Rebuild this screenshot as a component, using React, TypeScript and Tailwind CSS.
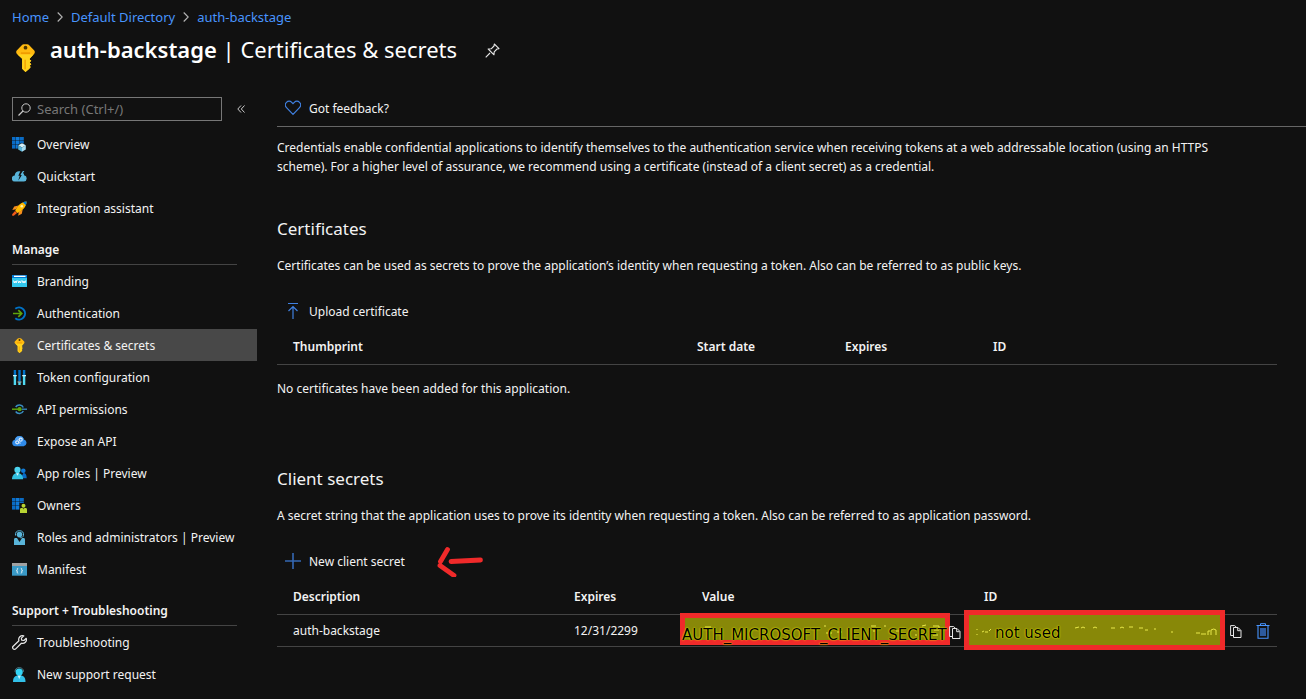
import type { ReactNode } from "react";

function Glyph({ children, size = "size-[15px]", box = "0 0 15 15" }: { children: ReactNode; size?: string; box?: string }) {
  return (
    <svg viewBox={box} className={`${size} shrink-0`} fill="none" aria-hidden="true">
      {children}
    </svg>
  );
}

function TileGrid() {
  return (
    <g>
      {[0, 4, 8].map((y) => (
        <g key={y}>
          <rect x="0" y={y} width="3.6" height="3.6" fill="#0a6bc4" />
          <rect x="4" y={y} width="3.6" height="3.6" fill="#0f7ad8" />
          <rect x="8" y={y} width="3.8" height="3.6" fill="#0a6bc4" />
        </g>
      ))}
    </g>
  );
}

const OverviewIcon = () => (
  <Glyph>
    <TileGrid />
    <path d="M9.8 5.8 14 8v4.6L9.8 15 5.8 12.600V8z" fill="#111" />
    <path d="M10 6.300 13.800 8.300 10 10.400 6.200 8.300z" fill="#d3effa" />
    <path d="M6.200 8.300 10 10.400v4.300L6.200 12.500z" fill="#59b4d9" />
    <path d="M13.800 8.300 10 10.400v4.300l3.800-2.200z" fill="#a5daf0" />
  </Glyph>
);

const QuickstartIcon = () => (
  <Glyph>
    <path d="M3 12.500a3 3 0 0 1-.3-6A4.200 4.200 0 0 1 7.500 2.300a5 5 0 0 1 4.600 3.900A3.200 3.200 0 0 1 12 12.500z" fill="#59b4d9" />
    <path d="M8.900 1 6.300 6.800h1.500L6.200 11.600 10.600 5.600H9.200L11 1z" fill="#111" />
    <path d="M10.800 1.900h1.600L10.200 5h1.900L8.400 9.800 9.800 6.100H8.400z" fill="#59b4d9" />
  </Glyph>
);

const RocketIcon = () => (
  <Glyph>
    <path d="M6.500 4.500 2.200 5.400.3 9l3.600-.7zM10.700 8.500l-.9 4.200-3.600 2 .6-3.700z" fill="#f78d1e" />
    <path d="M14.600.4c-3 .1-5.300 1.200-7.400 3.300C5.400 5.400 4 7.700 3.200 9.700l2.200 2.200c2-.8 4.200-2.300 5.900-4C13.300 5.900 14.500 3.400 14.600.4z" fill="#ffb900" />
    <path d="M14.600.4c-1.400 0-2.700.3-3.800.8l3 3c.5-1.200.8-2.400.8-3.800z" fill="#0078d4" />
    <path d="M3 10 .2 13.200v1.600h1.600L5.100 12z" fill="#f05a1a" />
    <circle cx="9.800" cy="5.200" r="1.300" fill="#fff3a8" />
  </Glyph>
);

const BrandingIcon = () => (
  <Glyph>
    <rect y="1" width="15" height="12" rx=".6" fill="#32c8ee" />
    <path d="M0 4V1.600A.6.6 0 0 1 .6 1h13.800a.6.6 0 0 1 .6.600V4z" fill="#0078d4" />
    <rect x="2" y="1.700" width="11.500" height="1.300" fill="#fff" />
    <path d="M1.500 6.500l.8 2.500.9-2 .9 2 .8-2.500M5.900 6.500l.8 2.500.9-2 .9 2 .8-2.500M10.300 6.500l.8 2.500.9-2 .9 2 .8-2.500" stroke="#fff" strokeWidth=".9" />
  </Glyph>
);

const AuthIcon = () => (
  <Glyph>
    <path d="M3.300 2.800a6 6 0 1 1 0 9.400" stroke="#0072c6" strokeWidth="2" />
    <path d="M1 7.500h8.500M6.300 4.200l3.400 3.300-3.400 3.300" stroke="#5ea50b" strokeWidth="1.700" />
  </Glyph>
);

const KeyShape = () => (
  <>
    <path d="M6.600.2h1.800c.5 0 .8.200 1.100.5l2.700 2.800c.4.500.4 1.200 0 1.700L9.700 7.900v.4l.9.700-.9.900.9.900-.9.900.6.600-.9 1.100L7.500 15 5.700 13.300V7.900L2.800 5.200c-.4-.5-.4-1.200 0-1.700L5.500.7c.3-.3.600-.5 1.100-.5z" fill="#ffb910" />
    <path d="M3.200 5.600h8.600L9.700 7.900v.4l.9.700-.9.900.9.900-.9.900.6.600-.9 1.100L7.500 15 5.700 13.300V7.900z" fill="#ffd21c" />
    <path d="M7.300 8.500v5" stroke="#f09c00" strokeWidth=".7" />
    <circle cx="7.500" cy="2" r="1" fill="#4a3500" />
    <path d="M5 4.900h5" stroke="#f09c00" strokeWidth=".9" />
  </>
);

const KeyIcon = () => (
  <Glyph>
    <KeyShape />
  </Glyph>
);

const TokenIcon = () => (
  <Glyph>
    <path d="M2.900 0v5M7.500 0v11M12.100 0v5" stroke="#0072c6" strokeWidth="2.400" />
    <path d="M2.900 6v9M12.100 6v9" stroke="#50d9f2" strokeWidth="2.400" />
    <path d="M7.500 12.500V15" stroke="#50d9f2" strokeWidth="2.400" />
    <path d="M1 5.600h3.800M10.200 5.600H14M5.600 12h3.800" stroke="#c4f1fa" strokeWidth="1.200" />
  </Glyph>
);

const PermissionsIcon = () => (
  <Glyph>
    <path d="M3.700 5A4.300 4.300 0 0 1 11.300 5.500M3.700 9.500a4.300 4.300 0 0 0 7.600-.5" stroke="#3a8fc4" strokeWidth="1.500" />
    <path d="M10 7.200h5" stroke="#3a8fc4" strokeWidth="1.300" />
    <path d="M0 7.200h7" stroke="#5ea50b" strokeWidth="1.500" />
    <circle cx="7.600" cy="7.200" r="2.100" fill="#5ea50b" />
  </Glyph>
);

const ExposeIcon = () => (
  <Glyph>
    <path d="M3.400 12.300A3.300 3.300 0 0 1 2.700 5.800 4.800 4.800 0 0 1 12 5.500a3.500 3.500 0 0 1-.3 6.800z" fill="#2f8ae8" />
    <path d="M3 6a4.600 4.600 0 0 1 8.800-.7C8.800 5.600 5.500 5.500 3 6z" fill="#4fa0f0" />
    <circle cx="5.200" cy="8.300" r="1.500" stroke="#d7eafd" strokeWidth="1.200" />
    <circle cx="8.700" cy="5.700" r="1.500" stroke="#d7eafd" strokeWidth="1.200" />
    <path d="m6.800 8.800 1.900.300M5.500 6.300l.7-.9" stroke="#d7eafd" />
  </Glyph>
);

const RolesIcon = () => (
  <Glyph>
    <path d="M8.500 12.300h6.200c0-3.300-1.200-5.200-3.300-5.200z" fill="#0a6bc4" />
    <circle cx="11.300" cy="4.800" r="2.300" fill="#0f7ad8" />
    <path d="M0 13.300C0 9.500 2 7 5.500 7s5.600 2.500 5.600 6.300z" fill="#32c0e0" />
    <circle cx="5.500" cy="3.900" r="3.100" fill="#4bd3ef" />
    <path d="m4.100 7.200 1.400 2.600 1.400-2.600z" fill="#d3f5fc" />
  </Glyph>
);

const OwnersIcon = () => (
  <Glyph>
    <TileGrid />
    <path d="M7.500 5H15v10H7.500z" fill="#111" />
    <path d="M8 15v-3.600c0-.8.6-1.400 1.400-1.400h4.200c.8 0 1.400.6 1.400 1.400V15z" fill="#b8d432" />
    <circle cx="11.500" cy="7.700" r="2" fill="#b8d432" />
    <path d="m10.500 10 1 1.600 1-1.600z" fill="#48580d" />
  </Glyph>
);

const AdminIcon = () => (
  <Glyph>
    <path d="M2 15V9.500C2 8.700 2.600 8 3.400 8h8.200c.8 0 1.400.7 1.400 1.500V15z" fill="#59b4d9" />
    <path d="m5 8 2.500 4L10 8z" fill="#111" />
    <circle cx="7.500" cy="4.600" r="2.800" fill="#59b4d9" />
    <path d="M3.500 5.500C2.900 2.500 4.700.7 7.500.7s4.600 1.800 4 4.800c-.3 1.400-1.600 2.300-3.300 2.300" stroke="#59b4d9" strokeWidth="1" />
  </Glyph>
);

const ManifestIcon = () => (
  <Glyph>
    <path d="M0 1h15v12.700H0z" fill="#3999c6" />
    <path d="M0 1h15v3H0z" fill="#a0a1a2" />
    <path d="M6.200 6.300c-1.200 0-.9.600-.9 1.400 0 .7-.3 1-.8 1 .5 0 .8.300.8 1 0 .8-.3 1.500.9 1.500M8.800 6.300c1.200 0 .9.600.9 1.400 0 .7.3 1 .8 1-.5 0-.8.300-.8 1 0 .8.3 1.500-.9 1.500" stroke="#fff" strokeWidth=".9" />
  </Glyph>
);

const WrenchIcon = () => (
  <Glyph>
    <path d="M11.800.9A3.800 3.800 0 0 0 6.900 5.700L1.200 11.300a1.750 1.750 0 0 0 2.500 2.500L9.400 8.200a3.800 3.800 0 0 0 4.800-4.900L11.900 5.500 9.600 5.100 9.400 3.100z" stroke="#e6e6e6" strokeWidth="1.200" strokeLinejoin="round" />
  </Glyph>
);

const SupportIcon = () => (
  <Glyph>
    <path d="M1 15c0-4.300 1.700-6.700 6.300-6.700s6.200 2.400 6.200 6.700z" fill="#32c0e8" />
    <circle cx="7.200" cy="5" r="3.600" fill="#32d4f5" />
    <path d="m5.600 8.600 1.600 3.700 1.700-3.700z" fill="#c9f4fc" />
    <path d="M3 4.800C3 2 4.600.6 7.200.6s4.400 1.500 4.400 4.200" stroke="#4d7480" strokeWidth="1" />
  </Glyph>
);

const Chevron = () => (
  <svg viewBox="0 0 6 10" className="h-[10px] w-[6px]" fill="none" aria-hidden="true">
    <path d="M.7.500 5.200 5 .7 9.500" stroke="#b4b4b4" strokeWidth="1.100" />
  </svg>
);

const CopyIcon = () => (
  <svg viewBox="0 0 12 13" className="h-[13px] w-[12px]" fill="none" aria-hidden="true">
    <path d="M3.500 2.500H8l3 3v7H3.500zM7.700 2.700v3h3M3 10.500H.600V.600h4l1.900 1.700" stroke="#e6e6e6" />
  </svg>
);

const TrashIcon = () => (
  <svg viewBox="0 0 14 16" className="h-[16px] w-[14px]" fill="none" aria-hidden="true">
    <path d="M.500 2.500h13M4.500 2V.700h5V2" stroke="#4894fe" />
    <path d="M2 3v12.300h10V3" stroke="#4894fe" strokeWidth="1.100" />
    <path d="M4 5h6v8H4z" fill="#2d5a9e" />
  </svg>
);

type Item = { label: string; icon: () => ReactNode };

const general: Item[] = [
  { label: "Overview", icon: OverviewIcon },
  { label: "Quickstart", icon: QuickstartIcon },
  { label: "Integration assistant", icon: RocketIcon },
];

const manage: Item[] = [
  { label: "Branding", icon: BrandingIcon },
  { label: "Authentication", icon: AuthIcon },
  { label: "Certificates & secrets", icon: KeyIcon },
  { label: "Token configuration", icon: TokenIcon },
  { label: "API permissions", icon: PermissionsIcon },
  { label: "Expose an API", icon: ExposeIcon },
  { label: "App roles | Preview", icon: RolesIcon },
  { label: "Owners", icon: OwnersIcon },
  { label: "Roles and administrators | Preview", icon: AdminIcon },
  { label: "Manifest", icon: ManifestIcon },
];

const support: Item[] = [
  { label: "Troubleshooting", icon: WrenchIcon },
  { label: "New support request", icon: SupportIcon },
];

function NavList({ items }: { items: Item[] }) {
  return (
    <ul>
      {items.map(({ label, icon: Icon }) => {
        const current = label === "Certificates & secrets";
        return (
          <li key={label}>
            <a
              href="#"
              aria-current={current ? "page" : undefined}
              className={`flex h-8 items-center gap-[10px] pl-3 whitespace-nowrap ${current ? "bg-[#484848]" : ""}`}
            >
              <Icon />
              <span className="pt-[2px]">{label}</span>
            </a>
          </li>
        );
      })}
    </ul>
  );
}

function NavHeading({ children }: { children: ReactNode }) {
  return (
    <h2 className="mr-5 ml-3 flex h-[41px] items-end border-b border-[#444] pb-[5px] font-semibold">{children}</h2>
  );
}

function Breadcrumb() {
  return (
    <nav aria-label="Breadcrumb" className="flex h-[34px] items-center gap-2 text-[13px] text-[#4894fe]">
      <a href="#">Home</a>
      <Chevron />
      <a href="#">Default Directory</a>
      <Chevron />
      <a href="#">auth-backstage</a>
    </nav>
  );
}

function Sidebar() {
  return (
    <aside className="w-[257px] shrink-0">
      <div className="mb-[7px] flex items-center pl-3">
        <div className="flex h-6 w-[210px] items-center gap-[6px] border border-[#777] px-[5px]">
          <svg viewBox="0 0 13 13" className="size-[13px]" fill="none" aria-hidden="true">
            <circle cx="8" cy="5" r="4.200" stroke="#c8c8c8" />
            <path d="M5 8 .5 12.500" stroke="#c8c8c8" strokeWidth="1.200" />
          </svg>
          <input
            type="search"
            aria-label="Search"
            placeholder="Search (Ctrl+/)"
            className="h-5 min-w-0 flex-1 bg-transparent text-[13px] outline-none placeholder:text-[#777]"
          />
        </div>
        <button type="button" aria-label="Collapse menu" className="ml-[15px]">
          <svg viewBox="0 0 8 8" className="size-2" fill="none" aria-hidden="true">
            <path d="M4 .500.800 4 4 7.500M7.500.500 4.300 4l3.200 3.500" stroke="#c8c8c8" />
          </svg>
        </button>
      </div>
      <nav aria-label="Resource menu">
        <NavList items={general} />
        <NavHeading>Manage</NavHeading>
        <NavList items={manage} />
        <NavHeading>Support + Troubleshooting</NavHeading>
        <NavList items={support} />
      </nav>
    </aside>
  );
}

function Command({ icon, children }: { icon: ReactNode; children: ReactNode }) {
  return (
    <button type="button" className="flex h-8 items-center gap-2 pl-2">
      {icon}
      <span className="pt-[2px]">{children}</span>
    </button>
  );
}

function Th({ width = "", children }: { width?: string; children: ReactNode }) {
  return <th className={`${width} pt-[3px] pl-4 font-semibold`}>{children}</th>;
}

function CertificatesSection() {
  return (
    <section className="mr-[29px]">
      <h2 className="text-[17px] leading-6">Certificates</h2>
      <p className="mt-[15px] mb-[20px] leading-[19px]">
        Certificates can be used as secrets to prove the application’s identity when requesting a token. Also can be
        referred to as public keys.
      </p>
      <Command
        icon={
          <Glyph size="size-4" box="0 0 16 16">
            <path d="M3 .500h10M8 16V3.500M3.500 8 8 3.500 12.500 8" stroke="#4080e0" strokeWidth="1.200" />
          </Glyph>
        }
      >
        Upload certificate
      </Command>
      <table className="w-full table-fixed text-left">
        <thead>
          <tr className="h-[37px] border-b border-[#444]">
            <Th width="w-[404px]">Thumbprint</Th>
            <Th width="w-[148px]">Start date</Th>
            <Th width="w-[148px]">Expires</Th>
            <Th>ID</Th>
          </tr>
        </thead>
        <tbody>
          <tr className="h-12">
            <td colSpan={4} className="pt-[2px]">
              No certificates have been added for this application.
            </td>
          </tr>
        </tbody>
      </table>
    </section>
  );
}

function SecretsSection() {
  return (
    <section className="mt-[55px] mr-[29px]">
      <h2 className="text-[17px] leading-6">Client secrets</h2>
      <p className="mt-[15px] mb-[20px] leading-[19px]">
        A secret string that the application uses to prove its identity when requesting a token. Also can be referred
        to as application password.
      </p>
      <div className="flex items-center gap-[32px]">
        <Command
          icon={
            <Glyph size="size-4" box="0 0 16 16">
              <path d="M8 0v16M0 8h16" stroke="#3568b4" strokeWidth="1.600" />
            </Glyph>
          }
        >
          New client secret
        </Command>
        <svg viewBox="0 0 48 32" className="h-8 w-12" fill="none" aria-hidden="true">
          <path d="m10.500 4.500-7 12M3 20.500l14 10M14 16.500l29.500-1.500" stroke="#f02a2a" strokeWidth="4.800" strokeLinecap="round" />
        </svg>
      </div>
      <table className="w-full table-fixed text-left">
        <thead>
          <tr className="h-[37px] border-b border-[#444]">
            <Th width="w-[281px]">Description</Th>
            <Th width="w-[128px]">Expires</Th>
            <Th width="w-[282px]">Value</Th>
            <Th>ID</Th>
          </tr>
        </thead>
        <tbody>
          <tr className="h-8 border-b border-[#444]">
            <td className="pt-[2px] pl-4">auth-backstage</td>
            <td className="pt-[2px] pl-4">12/31/2299</td>
            <td className="relative">
              <div className="absolute -top-[2px] -left-[6px] h-8 w-[270px] border-[5px] border-[#f02a2a] bg-[#888808]">
                <svg viewBox="0 0 260 22" className="absolute inset-0 h-full w-full" fill="none" aria-hidden="true">
                  <path d="M20 9h6M139 8h2M141 15h6M152 14h5M186 8h5M188 13h3M199 8h2M211 13h3M237 8l4-1M248 8h6v4h-5M248 17h5M230 17h2" stroke="#e8e84a" />
                </svg>
                <span className="absolute top-[8px] -left-[3px] font-['DejaVu_Sans',sans-serif] text-[15px] leading-[18px] whitespace-nowrap text-black [text-shadow:0_0_1px_#e6e600,0_0_2px_#e6e600]">
                  AUTH_MICROSOFT_CLIENT_SECRET
                </span>
              </div>
              <button type="button" aria-label="Copy value" className="absolute top-[11px] left-[263px]">
                <CopyIcon />
              </button>
            </td>
            <td className="relative">
              <div className="absolute -top-[5px] -left-1 h-10 w-[261px] border-[5px] border-[#f02a2a] bg-[#888808]">
                <svg viewBox="0 0 251 30" className="absolute inset-0 h-full w-full" fill="none" aria-hidden="true">
                  <path d="M8 14v1M8 19v1M13 17l2-1M16 17h3M20 16l2-2M106 13l4-1M112 13q2-2 4 0M124 13q2-2 4 0M142 13h4M151 13q2-2 4 0M160 12h4M170 13h4M176 15h3M186 13v2M202 17h2M227 18h4M232 19h5M239 20v-4h2M242 20v-5q3-2 5 0v5" stroke="#e8e84a" />
                </svg>
                <span className="absolute top-[9px] left-[26px] font-['DejaVu_Sans',sans-serif] text-[15px] leading-[18px] whitespace-nowrap text-black [text-shadow:0_0_1px_#e6e600,0_0_2px_#e6e600]">
                  not used
                </span>
              </div>
              <div className="flex items-center justify-end gap-[14px] pt-[2px] pr-[7px]">
                <button type="button" aria-label="Copy ID">
                  <CopyIcon />
                </button>
                <button type="button" aria-label="Delete secret">
                  <TrashIcon />
                </button>
              </div>
            </td>
          </tr>
        </tbody>
      </table>
    </section>
  );
}

export default function App() {
  return (
    <div className="min-h-screen bg-[#111] font-['Noto_Sans',sans-serif] text-[12px] leading-[18px] text-[#f3f3f3]">
      <header className="px-3">
        <Breadcrumb />
        <div className="flex h-8 items-center">
          <svg viewBox="2.500 0 10 15" className="mt-[16px] ml-1 h-[28px] w-[19px]" aria-hidden="true">
            <KeyShape />
          </svg>
          <h1 className="-mt-[2px] ml-[15px] text-[22px] leading-8 whitespace-nowrap text-white">
            <span className="font-semibold">auth-backstage</span> | Certificates &amp; secrets
          </h1>
          <button type="button" aria-label="Pin" className="ml-7">
            <svg viewBox="0 0 15 15" className="size-[15px]" fill="none" aria-hidden="true">
              <path d="M.700 14.300 5 10M9.300 1l4.700 4.700-2 .3-2.800 2.800-.2 3L3.200 6l3-.2L9 3z" stroke="#e6e6e6" strokeWidth="1.100" strokeLinejoin="round" />
            </svg>
          </button>
        </div>
      </header>
      <div className="mt-[31px] flex">
        <Sidebar />
        <main className="min-w-0 flex-1 pl-5">
          <div className="-mt-[5px] mb-[11px] border-b border-[#666] pb-[2px]">
            <Command
              icon={
                <Glyph size="size-4" box="0 0 16 16">
                  <path d="M8 14.300 1.500 7.600A3.800 3.800 0 0 1 1.500 2.300 3.600 3.600 0 0 1 6.700 2.300L8 3.600l1.300-1.300a3.600 3.600 0 0 1 5.200 0 3.800 3.800 0 0 1 0 5.300z" stroke="#4080e0" strokeWidth="1.200" />
                </Glyph>
              }
            >
              Got feedback?
            </Command>
          </div>
          <p className="mb-[41px] max-w-[950px] leading-[19px]">
            Credentials enable confidential applications to identify themselves to the authentication service when
            receiving tokens at a web addressable location (using an HTTPS scheme). For a higher level of assurance, we
            recommend using a certificate (instead of a client secret) as a credential.
          </p>
          <CertificatesSection />
          <SecretsSection />
        </main>
      </div>
    </div>
  );
}
